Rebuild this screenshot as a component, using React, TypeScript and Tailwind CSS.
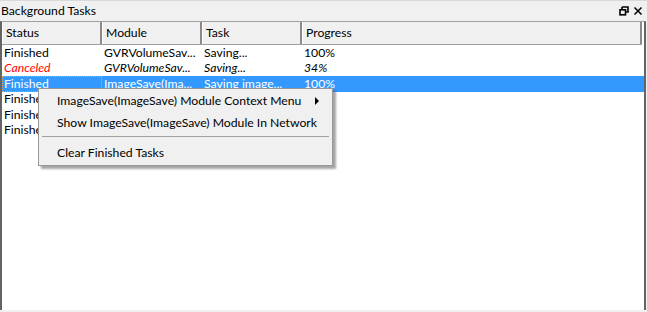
const font = { fontFamily: 'Lato, "Liberation Sans", sans-serif' }

type Task = {
  status: string
  module: string
  task: string
  progress: string
  canceled?: boolean
  selected?: boolean
}

const tasks: Task[] = [
  { status: "Finished", module: "GVRVolumeSav...", task: "Saving...", progress: "100%" },
  { status: "Canceled", module: "GVRVolumeSav...", task: "Saving...", progress: "34%", canceled: true },
  { status: "Finished", module: "ImageSave(Ima...", task: "Saving image...", progress: "100%", selected: true },
  { status: "Finished", module: "", task: "", progress: "" },
  { status: "Finished", module: "", task: "", progress: "" },
  { status: "Finished", module: "", task: "", progress: "" },
]

const columns = ["Status", "Module", "Task", "Progress"]

export default function App() {
  return (
    <div
      className="w-[647px] h-[312px] bg-[#f0f0f0] flex flex-col text-[12.2px] text-black overflow-hidden relative"
      style={font}
    >
      {/* title bar */}
      <div className="h-[21px] flex items-center justify-between pl-[1px] pr-[4px] border-t border-[#d9d9d9]">
        <span className="leading-none">Background Tasks</span>
        <div className="flex items-center gap-[4px]">
          <svg width="10" height="10" viewBox="0 0 10 10">
            <path d="M3 1h6v5H7M3 1v2" fill="none" stroke="#000" strokeWidth="1.6" />
            <rect x="1" y="3.8" width="5.5" height="5" fill="none" stroke="#000" strokeWidth="1.6" />
          </svg>
          <svg width="10" height="10" viewBox="0 0 10 10">
            <path d="M1.5 1.5l7 7M8.5 1.5l-7 7" stroke="#000" strokeWidth="1.5" />
          </svg>
        </div>
      </div>

      {/* table frame */}
      <div className="flex-1 mr-[1px] mb-[2px] border-l-2 border-r-2 border-t border-[#646464] border-t-[#a0a0a0] bg-white flex flex-col">
        <div className="flex h-[23px] bg-[#f0f0f0] border-b border-[#a0a0a0] mr-[2px]">
          {columns.map((c, i) => (
            <div
              key={c}
              className={`flex items-center pl-[3px] border-r-2 border-[#8a8a8a] border-l border-l-white ${
                i === 3 ? "flex-1" : "w-[100px]"
              }`}
            >
              {c}
            </div>
          ))}
        </div>
        <div className="flex flex-col">
          {tasks.map((t, i) => (
            <div
              key={i}
              className={`flex h-[15.5px] items-center leading-none whitespace-nowrap ${
                t.selected ? "bg-[#3399ff] text-white" : ""
              } ${t.canceled ? "italic" : ""}`}
            >
              <div
                className={`w-[100px] shrink-0 h-full flex items-center pl-[2px] ${
                  t.selected ? "outline outline-1 outline-dotted outline-[#e8a050] -outline-offset-1" : ""
                } ${t.canceled ? "text-[#ff0000]" : ""}`}
              >
                {t.status}
              </div>
              <div className="w-[100px] shrink-0 pl-[2px]">{t.module}</div>
              <div className="w-[100px] shrink-0 pl-[2px]">{t.task}</div>
              <div className="flex-1 pl-[2px]">{t.progress}</div>
            </div>
          ))}
        </div>
      </div>

      {/* context menu */}
      <div className="absolute left-[38px] top-[88px] w-[295px] bg-[#f0f0f0] border border-[#979797] shadow-[3px_3px_2px_rgba(0,0,0,0.35)] py-[1px] whitespace-nowrap">
        <div className="h-[22px] flex items-center pl-[18px] pr-[8px] justify-between">
          <span>ImageSave(ImageSave) Module Context Menu</span>
          <svg width="5" height="8" viewBox="0 0 5 8" className="mr-[4px]">
            <path d="M0 0l4 4-4 4z" fill="#000" />
          </svg>
        </div>
        <div className="h-[22px] flex items-center pl-[18px]">
          <span>Show ImageSave(ImageSave) Module In Network</span>
        </div>
        <div className="h-[8px] pt-[2px] px-[3px]">
          <div className="h-px w-full bg-[#a0a0a0]" />
        </div>
        <div className="h-[22px] flex items-center pl-[18px]">
          <span>Clear Finished Tasks</span>
        </div>
      </div>
    </div>
  )
}
